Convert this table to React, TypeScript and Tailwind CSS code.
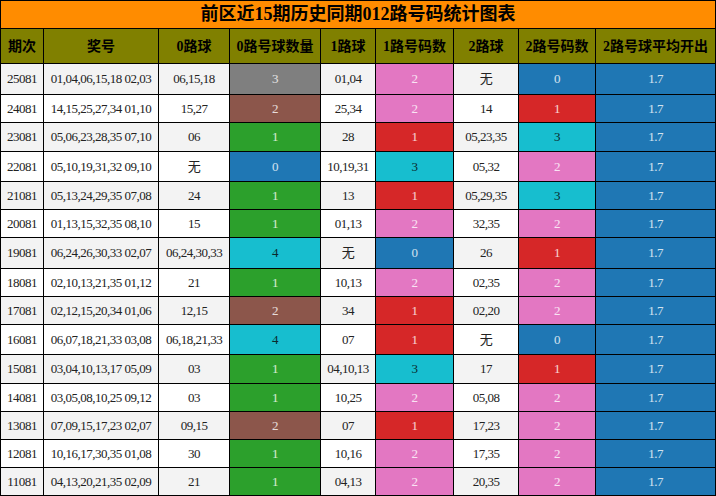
const FONT = "font-['Liberation_Serif','Noto_Sans_CJK_SC',serif]"

const headers = ['期次', '奖号', '0路球', '0路号球数量', '1路球', '1路号码数', '2路球', '2路号码数', '2路号球平均开出']

// cell colour by category
const tone: Record<string, string> = {
  gray: 'bg-[#7f7f7f] text-white/80',
  brown: 'bg-[#8c564b] text-white/80',
  green: 'bg-[#2ca02c] text-white/80',
  blue: 'bg-[#1f77b4] text-white/80',
  pink: 'bg-[#e377c2] text-white/80',
  red: 'bg-[#d62728] text-white/80',
  cyan: 'bg-[#17becf] text-[#0a2a2e]',
}

type Row = [string, string, string, string, string, string, string, string, string, string, string]

// issue, numbers, r0, r0n, r0color, r1, r1n, r1color, r2, r2n, r2color
const rows: Row[] = [
  ['25081', '01,04,06,15,18 02,03', '06,15,18', '3', 'gray', '01,04', '2', 'pink', '无', '0', 'blue'],
  ['24081', '14,15,25,27,34 01,10', '15,27', '2', 'brown', '25,34', '2', 'pink', '14', '1', 'red'],
  ['23081', '05,06,23,28,35 07,10', '06', '1', 'green', '28', '1', 'red', '05,23,35', '3', 'cyan'],
  ['22081', '05,10,19,31,32 09,10', '无', '0', 'blue', '10,19,31', '3', 'cyan', '05,32', '2', 'pink'],
  ['21081', '05,13,24,29,35 07,08', '24', '1', 'green', '13', '1', 'red', '05,29,35', '3', 'cyan'],
  ['20081', '01,13,15,32,35 08,10', '15', '1', 'green', '01,13', '2', 'pink', '32,35', '2', 'pink'],
  ['19081', '06,24,26,30,33 02,07', '06,24,30,33', '4', 'cyan', '无', '0', 'blue', '26', '1', 'red'],
  ['18081', '02,10,13,21,35 01,12', '21', '1', 'green', '10,13', '2', 'pink', '02,35', '2', 'pink'],
  ['17081', '02,12,15,20,34 01,06', '12,15', '2', 'brown', '34', '1', 'red', '02,20', '2', 'pink'],
  ['16081', '06,07,18,21,33 03,08', '06,18,21,33', '4', 'cyan', '07', '1', 'red', '无', '0', 'blue'],
  ['15081', '03,04,10,13,17 05,09', '03', '1', 'green', '04,10,13', '3', 'cyan', '17', '1', 'red'],
  ['14081', '03,05,08,10,25 09,12', '03', '1', 'green', '10,25', '2', 'pink', '05,08', '2', 'pink'],
  ['13081', '07,09,15,17,23 02,07', '09,15', '2', 'brown', '07', '1', 'red', '17,23', '2', 'pink'],
  ['12081', '10,16,17,30,35 01,08', '30', '1', 'green', '10,16', '2', 'pink', '17,35', '2', 'pink'],
  ['11081', '04,13,20,21,35 02,09', '21', '1', 'green', '04,13', '2', 'pink', '20,35', '2', 'pink'],
]

function Cell({ children, className = '' }: { children: React.ReactNode; className?: string }) {
  return (
    <div className={`flex items-center justify-center whitespace-nowrap text-[13px] tracking-[-0.5px] ${className}`}>
      {children}
    </div>
  )
}

export default function App() {
  return (
    <div className={`w-[716px] h-[496px] bg-black p-px flex flex-col gap-px ${FONT}`}>
      {/* Title */}
      <div className="h-[27px] bg-[#ff8c00] flex items-center justify-center text-[18px] font-bold text-black">
        前区近15期历史同期012路号码统计图表
      </div>

      <div className="grid grid-cols-[42px_114px_70px_90px_54px_77px_64px_76px_119px] grid-rows-[34px_30px_27px_28px_29px_27px_27px_30px_27px_27px_29px_28px_27px_27px_27px_27px] gap-px">
        {headers.map((h) => (
          <div
            key={h}
            className="bg-[#808000] flex items-center justify-center text-[14px] font-bold text-black whitespace-nowrap"
          >
            {h}
          </div>
        ))}

        {rows.map((r, i) => {
          const base = i % 2 === 0 ? 'bg-[#f3f3f3] text-[#222]' : 'bg-white text-[#222]'
          return [
            <Cell key={`${r[0]}-a`} className={base}>{r[0]}</Cell>,
            <Cell key={`${r[0]}-b`} className={base}>{r[1]}</Cell>,
            <Cell key={`${r[0]}-c`} className={base}>{r[2]}</Cell>,
            <Cell key={`${r[0]}-d`} className={tone[r[4]]}>{r[3]}</Cell>,
            <Cell key={`${r[0]}-e`} className={base}>{r[5]}</Cell>,
            <Cell key={`${r[0]}-f`} className={tone[r[7]]}>{r[6]}</Cell>,
            <Cell key={`${r[0]}-g`} className={base}>{r[8]}</Cell>,
            <Cell key={`${r[0]}-h`} className={tone[r[10]]}>{r[9]}</Cell>,
            <Cell key={`${r[0]}-i`} className={tone.blue}>1.7</Cell>,
          ]
        })}
      </div>
    </div>
  )
}
